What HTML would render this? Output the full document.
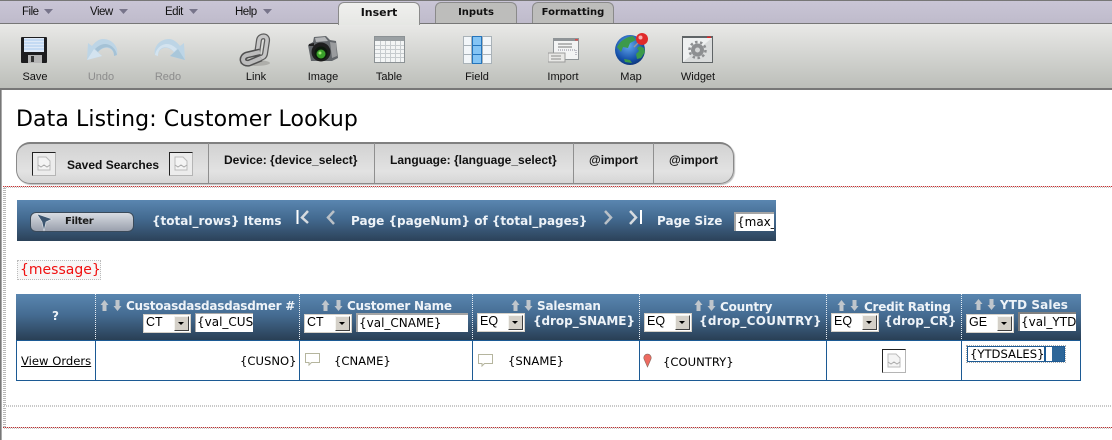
<!DOCTYPE html>
<html><head><meta charset="utf-8"><style>
html,body{margin:0;padding:0;background:#fff}
#p{position:relative;width:1112px;height:440px;overflow:hidden;background:#fff;font-family:"Liberation Sans",sans-serif;color:#000}
#p div,#p svg{position:absolute}
.t{white-space:nowrap;line-height:14px}
.m{font-size:11.5px;letter-spacing:-.5px;color:#111;top:5px}
.l{font-size:11px;color:#111;top:70px;text-align:center;width:80px}
.g{color:#8c8c8c}
.tab{top:2px;height:21px;border:1px solid #8a8a8a;border-bottom:none;border-radius:6px 6px 0 0;background:#bdbdbb;font:bold 10px/19px "DejaVu Sans",sans-serif;text-align:center;color:#111;box-sizing:border-box}
.sb{font:bold 12px/14px "Liberation Sans",sans-serif;color:#111;white-space:nowrap}
.sep{width:1px;top:143px;height:40px;background:#8f8f8f}
.w{font:bold 12px/14px "DejaVu Sans",sans-serif;color:#eef3f8;white-space:nowrap}
.ms{font:11.6px/14px "DejaVu Sans",sans-serif;color:#000;white-space:nowrap}
.cs{width:1px;top:294px;height:46px;background-image:repeating-linear-gradient(#e8eef4 0 1px,transparent 1px 2px)}
.cl{width:1px;top:340px;height:41px;background:#1c5a94}
.sel{background:#fff;border:1px solid #d4d0c8;box-sizing:border-box;height:19px;width:48px;font:12.5px/15px "Liberation Sans",sans-serif;padding-left:2px}
.sel i{position:absolute;right:1px;top:1px;width:15px;height:15px;background:#d4d0c8;border-top:1px solid #f4f4f0;border-left:1px solid #f4f4f0;border-right:1px solid #404040;border-bottom:1px solid #404040;box-sizing:border-box}
.sel i:after{content:"";position:absolute;left:3px;top:5px;border:3px solid transparent;border-top:3px solid #000;border-bottom:none}
.inp{background:#fff;box-sizing:border-box;height:19px;overflow:hidden;font:12px/17px "DejaVu Sans",sans-serif;border-top:2px solid #a5a5a5;border-left:2px solid #a5a5a5;padding-left:1px;white-space:nowrap}
.bi{background:#fff;border-top:1px solid #222;border-left:1px solid #222;border-right:1px solid #b5b5b5;border-bottom:1px solid #b5b5b5;box-sizing:border-box;width:24px;height:24px}
</style></head><body><div id="p">

<div style="left:0;top:0;width:1112px;height:1px;background:#777"></div>
<div style="left:0;top:1px;width:1112px;height:22px;background:linear-gradient(#c9c5d6,#bfbbcb)"></div>
<div style="left:0;top:23px;width:1112px;height:1px;background:#777"></div>
<div style="left:0;top:24px;width:1112px;height:64px;background:linear-gradient(#e9e9e7,#d9dad7 35%,#bcbeb9)"></div>
<div style="left:0;top:88px;width:1112px;height:2px;background:#777"></div>
<div style="left:0;top:90px;width:1px;height:350px;background:#777"></div>
<div style="left:1px;top:90px;width:1px;height:350px;background:#aaa"></div>

<div class="t m" style="left:22px">File</div><svg style="left:44px;top:9px" width="10" height="6"><path d="M0 0h9L4.500 5z" fill="#77748a"/></svg>
<div class="t m" style="left:90px">View</div><svg style="left:119px;top:9px" width="10" height="6"><path d="M0 0h9L4.500 5z" fill="#77748a"/></svg>
<div class="t m" style="left:165px">Edit</div><svg style="left:189px;top:9px" width="10" height="6"><path d="M0 0h9L4.500 5z" fill="#77748a"/></svg>
<div class="t m" style="left:235px">Help</div><svg style="left:263px;top:9px" width="10" height="6"><path d="M0 0h9L4.500 5z" fill="#77748a"/></svg>

<div class="tab" style="left:338px;width:82px;height:23px;font-size:11px;background:linear-gradient(#f0f0ee,#e6e7e4)">Insert</div>
<div class="tab" style="left:435px;width:82px">Inputs</div>
<div class="tab" style="left:532px;width:82px">Formatting</div>

<!-- Save -->
<svg style="left:20px;top:36px" width="30" height="30"><rect x="1" y="1" width="26" height="26" rx="1" fill="#1d1d1f"/><rect x="4" y="2" width="20" height="14" fill="#dfeaf8"/><path d="M4 4h20M4 7h20M4 10h20M4 13h20" stroke="#a9c9ee" stroke-width="1"/><rect x="8" y="19" width="14" height="8" fill="#b5b5b5"/><rect x="11" y="20" width="3" height="6" fill="#333"/></svg>
<!-- Undo -->
<svg style="left:85px;top:34px" width="35" height="30"><path d="M3 9L2 26 17 22 13 18C16 15 20 13 23 14 27 15 29 18 29 22L32 21C34 14 28 5 18 5 14 5 10 8 7 12z" fill="#bdd5e6"/><path d="M2 26L17 22 9 15z" fill="#d3e3ef"/><path d="M13 18C16 14 21 12 25 14 28 16 29 18 29 22L32 21C31 15 26 10 20 10 16 10 12 13 10 15z" fill="#a5c2d6"/></svg>
<!-- Redo -->
<svg style="left:152px;top:34px" width="35" height="30"><g transform="translate(35,0) scale(-1,1)"><path d="M3 9L2 26 17 22 13 18C16 15 20 13 23 14 27 15 29 18 29 22L32 21C34 14 28 5 18 5 14 5 10 8 7 12z" fill="#bdd5e6"/><path d="M2 26L17 22 9 15z" fill="#a9c7da"/><path d="M13 18C16 14 21 12 25 14 28 16 29 18 29 22L32 21C31 15 26 10 20 10 16 10 12 13 10 15z" fill="#d3e3ef"/></g></svg>
<!-- Link -->
<svg style="left:238px;top:32px" width="36" height="36"><ellipse cx="17" cy="31" rx="15" ry="3" fill="#aeaeaa"/><path d="M19 22L21 8C22 3 30 3 29 9L27 22C26 27 19 27 19 22z" fill="none" stroke="#5c5c5c" stroke-width="6"/><path d="M19 22L21 8C22 3 30 3 29 9L27 22C26 27 19 27 19 22z" fill="none" stroke="#c6c6c6" stroke-width="3.500"/><path d="M22 20L9 23C3 25 4 32 11 31L23 26" fill="none" stroke="#505050" stroke-width="7"/><path d="M22 20L9 23C3 25 4 32 11 31L23 26" fill="none" stroke="#bcbcbc" stroke-width="4"/></svg>
<!-- Image -->
<svg style="left:306px;top:34px" width="34" height="30"><path d="M8 3l12-1 4 4 6 1 2 17-6 3H5L2 11 7 8z" fill="#62666a"/><path d="M9 4l10-1 3 4-12 1z" fill="#b4b6b8"/><path d="M24 8l6 1 1 13-5 2z" fill="#9a9c9e"/><path d="M3 10l5-1v3H3z" fill="#222"/><circle cx="15" cy="18" r="9.500" fill="#1e1e1e"/><circle cx="15" cy="19" r="6.500" fill="#0c1a0c"/><circle cx="15" cy="20" r="4.500" fill="#3aa02a"/><circle cx="14" cy="19" r="1.500" fill="#a6e878"/></svg>
<!-- Table -->
<svg style="left:373px;top:35px" width="33" height="30"><rect x="1" y="1" width="31" height="27" fill="#8b9194"/><rect x="2" y="2" width="29" height="4" fill="#9aa0a3"/><rect x="2" y="6" width="29" height="21" fill="#f3f5f5"/><path d="M2 10.500h29M2 14.500h29M2 18.500h29M2 22.500h29M7.500 6v21M12.500 6v21M17.500 6v21M22.500 6v21M27.500 6v21" stroke="#c6cbce" stroke-width="1"/></svg>
<!-- Field -->
<svg style="left:462px;top:35px" width="31" height="30"><rect x="1" y="1" width="29" height="28" fill="#a9b2b8"/><rect x="2" y="2" width="27" height="26" fill="#f2f6f9"/><path d="M2 10.500h27M2 19.500h27" stroke="#a9b2b8"/><rect x="10" y="1" width="10" height="28" fill="#2474bc"/><rect x="11" y="2" width="8" height="8" fill="#84c4f4"/><rect x="11" y="11" width="8" height="8" fill="#84c4f4"/><rect x="11" y="20" width="8" height="8" fill="#84c4f4"/><path d="M9.500 1v28M20.500 1v28" stroke="#a9b2b8"/></svg>
<!-- Import -->
<svg style="left:548px;top:37px" width="34" height="26"><rect x="5" y="1" width="26" height="22" fill="#8f9497"/><rect x="6" y="4" width="24" height="18" fill="#f3f4f4"/><rect x="27" y="2" width="3" height="1.500" fill="#d64a4a"/><path d="M10 7h14M10 10h14" stroke="#777"/><path d="M10 13h18v6" stroke="#889" stroke-dasharray="1 1" fill="none"/><rect x="0" y="16" width="17" height="9" fill="#e8e8e6" stroke="#9b9b9b"/><path d="M3 19h10M3 22h10" stroke="#8b8b8b"/></svg>
<!-- Map -->
<svg style="left:614px;top:32px" width="36" height="34"><defs><radialGradient id="gl" cx="45%" cy="35%" r="70%"><stop offset="0" stop-color="#64a8ef"/><stop offset="0.700" stop-color="#1550a8"/><stop offset="1" stop-color="#0c3070"/></radialGradient></defs><circle cx="16" cy="18" r="15" fill="url(#gl)"/><path d="M3 15C6 9 12 5 19 4l3 4-6 3-2 5-5-1-2 5zM26 14l4 2 1 4-4 6-4 1-1-5 3-3-2-3z" fill="#3c9a4a"/><path d="M10 27l6 1 2 3-7-1z" fill="#3c9a4a"/><path d="M20 15l6-6" stroke="#999" stroke-width="1.500"/><circle cx="28" cy="7" r="6" fill="#e02a2a"/><circle cx="26.500" cy="5.500" r="2" fill="#f7b0b0"/></svg>
<!-- Widget -->
<svg style="left:681px;top:35px" width="34" height="30"><rect x="1" y="1" width="31" height="27" fill="#5f6466"/><rect x="2" y="3" width="29" height="24" fill="#eef0f0"/><path d="M2 27L31 3v24z" fill="#dadcdc"/><rect x="26" y="1.500" width="4" height="1.500" fill="#e02a2a"/><circle cx="16.500" cy="15" r="6.500" fill="#8d8f91"/><circle cx="16.500" cy="15" r="8" fill="none" stroke="#8d8f91" stroke-width="2.500" stroke-dasharray="2.500 2.500"/><circle cx="16.500" cy="15" r="2.500" fill="#d4d6d6"/></svg>

<div class="t l" style="left:-5px">Save</div>
<div class="t l g" style="left:61px">Undo</div>
<div class="t l g" style="left:128px">Redo</div>
<div class="t l" style="left:216px">Link</div>
<div class="t l" style="left:283px">Image</div>
<div class="t l" style="left:349px">Table</div>
<div class="t l" style="left:437px">Field</div>
<div class="t l" style="left:523px">Import</div>
<div class="t l" style="left:591px">Map</div>
<div class="t l" style="left:658px">Widget</div>

<div class="t" style="left:16px;top:106px;font:22px/28px 'DejaVu Sans',sans-serif;letter-spacing:.1px;color:#000">Data Listing: Customer Lookup</div>

<!-- saved search bar -->
<div style="left:16px;top:142px;width:718px;height:42px;box-sizing:border-box;border:1px solid #8a8a8a;border-top:2px solid #808080;border-radius:14px;background:linear-gradient(#d2d2d2,#e2e2e2 70%,#d6d6d6);box-shadow:1px 1px 1px #bbb"></div>
<div class="sep" style="left:208px"></div><div class="sep" style="left:374px"></div><div class="sep" style="left:573px"></div><div class="sep" style="left:653px"></div>
<div class="bi" style="left:32px;top:152px;background:#ececec"></div>
<div class="bi" style="left:169px;top:152px;background:#ececec"></div>
<svg style="left:37px;top:156px" width="14" height="16"><path d="M1 1h8l4 4v9H1z" fill="#f4f4f4" stroke="#bbb"/><path d="M1 9l3 2 3-2 3 2 3-2" stroke="#aaa" fill="none"/></svg>
<svg style="left:174px;top:156px" width="14" height="16"><path d="M1 1h8l4 4v9H1z" fill="#f4f4f4" stroke="#bbb"/><path d="M1 9l3 2 3-2 3 2 3-2" stroke="#aaa" fill="none"/></svg>
<div class="sb" style="left:67px;top:158px">Saved Searches</div>
<div class="sb" style="left:224px;top:153px">Device: {device_select}</div>
<div class="sb" style="left:390px;top:153px">Language: {language_select}</div>
<div class="sb" style="left:589px;top:153px">@import</div>
<div class="sb" style="left:669px;top:153px">@import</div>

<!-- dotted lines -->
<div style="left:3px;top:186px;width:1109px;height:1px;background-image:repeating-linear-gradient(90deg,#c83030 0 1px,#e8d0d0 1px 2px)"></div>
<div style="left:3px;top:187px;width:1109px;height:1px;background-image:repeating-linear-gradient(90deg,#fff 0 1px,#c4c4c4 1px 2px)"></div>
<div style="left:3px;top:188px;width:3px;height:240px;background-image:repeating-linear-gradient(#b8b8b8 0 1px,#fff 1px 2px)"></div>
<div style="left:4px;top:405px;width:1108px;height:2px;background-image:repeating-linear-gradient(90deg,#c8c8c8 0 1px,#fff 1px 2px)"></div>
<div style="left:3px;top:427px;width:1109px;height:1px;background-image:repeating-linear-gradient(90deg,#b83030 0 1px,#e8d0d0 1px 2px)"></div>
<div style="left:3px;top:428px;width:1109px;height:1px;background-image:repeating-linear-gradient(90deg,#fff 0 1px,#c4c4c4 1px 2px)"></div>

<!-- filter bar -->
<div style="left:17px;top:200px;width:759px;height:41px;background:linear-gradient(#5a86b0,#436a90 45%,#2c4259)"></div>
<div style="left:30px;top:212px;width:104px;height:20px;box-sizing:border-box;border:1px solid #3a4a5a;border-radius:6px;background:linear-gradient(#d8dce2,#9aa0ad)"></div>
<svg style="left:36px;top:211px" width="22" height="22"><path d="M1 3l15 5-6 3-2 9-2-9z" fill="#3c5570" stroke="#e0e6ec" stroke-width=".6"/></svg>
<div class="sb" style="left:65px;top:215px;font:bold 10px/14px 'DejaVu Sans',sans-serif;color:#1a1a1a;letter-spacing:-.3px">Filter</div>
<div class="w" style="left:152px;top:214px">{total_rows} Items</div>
<svg style="left:295px;top:208px" width="18" height="20"><path d="M2.500 2v14" stroke="#fff" stroke-width="2"/><path d="M13 3L7 9.500 13 15" stroke="#d6dbe0" stroke-width="2.500" fill="none"/></svg>
<svg style="left:324px;top:209px" width="14" height="18"><path d="M10 2L4 8.500 10 15" stroke="#b9c0c7" stroke-width="2.500" fill="none"/></svg>
<div class="w" style="left:351px;top:214px">Page {pageNum} of {total_pages}</div>
<svg style="left:602px;top:209px" width="14" height="18"><path d="M3 2l6 6.500L3 15" stroke="#b9c0c7" stroke-width="2.500" fill="none"/></svg>
<svg style="left:628px;top:209px" width="18" height="20"><path d="M2 2l6 6.500L2 15" stroke="#d6dbe0" stroke-width="2.500" fill="none"/><path d="M13 1v14" stroke="#fff" stroke-width="2"/></svg>
<div class="w" style="left:657px;top:214px">Page Size</div>
<div class="inp" style="left:734px;top:212px;width:40px">{max_</div>

<!-- message -->
<div style="left:17px;top:260px;width:84px;height:20px;box-sizing:border-box;border:1px dotted #bbb;background:#f7f7f7"></div>
<div class="t" style="left:20px;top:262px;font:14px/16px 'DejaVu Sans',sans-serif;color:#f01010">{message}</div>

<!-- table -->
<div style="left:16px;top:294px;width:1065px;height:87px;box-sizing:border-box;border:1px solid #1c5a94;border-top:none"></div>
<div style="left:16px;top:294px;width:1065px;height:46px;background:linear-gradient(#5a86b0,#456c92 45%,#293f55)"></div>
<div style="left:16px;top:340px;width:1065px;height:1px;background:#1c5a94"></div>
<div class="cs" style="left:95px"></div><div class="cs" style="left:299px"></div><div class="cs" style="left:472px"></div><div class="cs" style="left:639px"></div><div class="cs" style="left:826px"></div><div class="cs" style="left:961px"></div>
<div class="cl" style="left:95px"></div><div class="cl" style="left:299px"></div><div class="cl" style="left:472px"></div><div class="cl" style="left:639px"></div><div class="cl" style="left:826px"></div><div class="cl" style="left:961px"></div>
<div class="w" style="left:52px;top:309px">?</div>

<svg style="left:100px;top:299px" width="24" height="13"><path d="M4.500 1L8.500 6H6.500v6h-4V6H.5z" fill="#c0c6cc"/><path d="M17.500 12l4-5h-2V1h-4v6h-2z" fill="#c0c6cc"/></svg>
<div class="w" style="left:126px;top:299px;letter-spacing:-.25px">Custoasdasdasdasdmer #</div>
<div class="sel" style="left:143px;top:314px"><span>CT</span><i></i></div>
<div class="inp" style="left:195px;top:313px;width:58px;height:19px;border-top:1px solid #aaa;border-left:1px solid #aaa">{val_CUS</div>

<svg style="left:321px;top:299px" width="24" height="13"><path d="M4.500 1L8.500 6H6.500v6h-4V6H.5z" fill="#c0c6cc"/><path d="M17.500 12l4-5h-2V1h-4v6h-2z" fill="#c0c6cc"/></svg>
<div class="w" style="left:347px;top:299px;letter-spacing:-.25px">Customer Name</div>
<div class="sel" style="left:304px;top:314px"><span>CT</span><i></i></div>
<div class="inp" style="left:356px;top:313px;width:112px">{val_CNAME}</div>

<svg style="left:511px;top:299px" width="24" height="13"><path d="M4.500 1L8.500 6H6.500v6h-4V6H.5z" fill="#c0c6cc"/><path d="M17.500 12l4-5h-2V1h-4v6h-2z" fill="#c0c6cc"/></svg>
<div class="w" style="left:537px;top:299px;letter-spacing:-.2px">Salesman</div>
<div class="sel" style="left:477px;top:313px"><span>EQ</span><i></i></div>
<div class="w" style="left:533px;top:314px;letter-spacing:-.05px">{drop_SNAME}</div>

<svg style="left:694px;top:299px" width="24" height="13"><path d="M4.500 1L8.500 6H6.500v6h-4V6H.5z" fill="#c0c6cc"/><path d="M17.500 12l4-5h-2V1h-4v6h-2z" fill="#c0c6cc"/></svg>
<div class="w" style="left:720px;top:300px;letter-spacing:-.2px">Country</div>
<div class="sel" style="left:644px;top:313px"><span>EQ</span><i></i></div>
<div class="w" style="left:699px;top:314px;letter-spacing:.3px">{drop_COUNTRY}</div>

<svg style="left:837px;top:299px" width="24" height="13"><path d="M4.500 1L8.500 6H6.500v6h-4V6H.5z" fill="#c0c6cc"/><path d="M17.500 12l4-5h-2V1h-4v6h-2z" fill="#c0c6cc"/></svg>
<div class="w" style="left:864px;top:300px;letter-spacing:-.25px">Credit Rating</div>
<div class="sel" style="left:831px;top:313px"><span>EQ</span><i></i></div>
<div class="w" style="left:884px;top:314px">{drop_CR}</div>

<svg style="left:974px;top:298px" width="24" height="13"><path d="M4.500 1L8.500 6H6.500v6h-4V6H.5z" fill="#c0c6cc"/><path d="M17.500 12l4-5h-2V1h-4v6h-2z" fill="#c0c6cc"/></svg>
<div class="w" style="left:1000px;top:298px;letter-spacing:.1px">YTD Sales</div>
<div class="sel" style="left:966px;top:314px"><span>GE</span><i></i></div>
<div class="inp" style="left:1018px;top:312px;width:58px;border-color:#808080">{val_YTD</div>

<div class="ms" style="left:21px;top:354px;text-decoration:underline">View Orders</div>
<div class="ms" style="left:240px;top:354px">{CUSNO}</div>
<svg style="left:305px;top:353px" width="16" height="13"><path d="M.5.500h14v9H6.500L4 12V9.500H.5z" fill="#fff" stroke="#b5b59e"/></svg>
<div class="ms" style="left:334px;top:354px">{CNAME}</div>
<svg style="left:478px;top:354px" width="16" height="13"><path d="M.5.500h14v9H6.500L4 12V9.500H.5z" fill="#fff" stroke="#b5b59e"/></svg>
<div class="ms" style="left:508px;top:354px">{SNAME}</div>
<svg style="left:643px;top:353px" width="10" height="16"><path d="M4.500 14L1 6a3.700 3.700 0 1 1 7 0z" fill="#ee6a60" stroke="#8a6a60" stroke-width=".6"/></svg>
<div class="ms" style="left:663px;top:355px">{COUNTRY}</div>
<div class="bi" style="left:882px;top:349px"></div>
<svg style="left:887px;top:353px" width="14" height="16"><path d="M1 1h8l4 4v9H1z" fill="#f4f4f4" stroke="#bbb"/><path d="M1 9l3 2 3-2 3 2 3-2" stroke="#aaa" fill="none"/></svg>
<div style="left:967px;top:346px;width:98px;height:16px;box-sizing:border-box;border:1px solid #1c5a94;outline:1px dotted #aaa"></div>
<div class="ms" style="left:970px;top:347px">{YTDSALES}</div>
<div style="left:1044px;top:347px;width:2px;height:14px;background:#1c5a94"></div>
<div style="left:1052px;top:347px;width:12px;height:14px;background:#2d6699"></div>
</div></body></html>
